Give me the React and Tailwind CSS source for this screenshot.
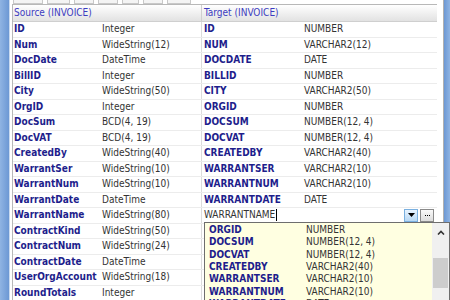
import React from 'react';

const rows = [
  ['ID', 'Integer', 'ID', 'NUMBER'],
  ['Num', 'WideString(12)', 'NUM', 'VARCHAR2(12)'],
  ['DocDate', 'DateTime', 'DOCDATE', 'DATE'],
  ['BillID', 'Integer', 'BILLID', 'NUMBER'],
  ['City', 'WideString(50)', 'CITY', 'VARCHAR2(50)'],
  ['OrgID', 'Integer', 'ORGID', 'NUMBER'],
  ['DocSum', 'BCD(4, 19)', 'DOCSUM', 'NUMBER(12, 4)'],
  ['DocVAT', 'BCD(4, 19)', 'DOCVAT', 'NUMBER(12, 4)'],
  ['CreatedBy', 'WideString(40)', 'CREATEDBY', 'VARCHAR2(40)'],
  ['WarrantSer', 'WideString(10)', 'WARRANTSER', 'VARCHAR2(10)'],
  ['WarrantNum', 'WideString(10)', 'WARRANTNUM', 'VARCHAR2(10)'],
  ['WarrantDate', 'DateTime', 'WARRANTDATE', 'DATE'],
  ['WarrantName', 'WideString(80)', null, null],
  ['ContractKind', 'WideString(50)', '', ''],
  ['ContractNum', 'WideString(24)', '', ''],
  ['ContractDate', 'DateTime', '', ''],
  ['UserOrgAccount', 'WideString(18)', '', ''],
  ['RoundTotals', 'Integer', '', ''],
];

const options = [
  ['ORGID', 'NUMBER'],
  ['DOCSUM', 'NUMBER(12, 4)'],
  ['DOCVAT', 'NUMBER(12, 4)'],
  ['CREATEDBY', 'VARCHAR2(40)'],
  ['WARRANTSER', 'VARCHAR2(10)'],
  ['WARRANTNUM', 'VARCHAR2(10)'],
  ['WARRANTDATE', 'DATE'],
];

const font = { fontFamily: '"DejaVu Sans Condensed", Tahoma, "Liberation Sans", sans-serif' };

const EditRow = () => (
  <div className="flex items-center h-full bg-white pl-[2px] pr-[3px]">
    <span className="text-[#333]">WARRANTNAME</span>
    <span className="w-px h-[12px] bg-black ml-px" />
    <div className="flex-1" />
    <div className="w-[14px] h-[13px] border border-[#7ab0e0] bg-gradient-to-b from-[#e8f4ff] to-[#b8d8f4] flex items-center justify-center">
      <svg width="7" height="4" viewBox="0 0 7 4"><path d="M0 0h7L3.5 4z" fill="#000" /></svg>
    </div>
    <div className="w-[14px] h-[13px] ml-[2px] border border-[#8a8a8a] bg-gradient-to-b from-[#fafafa] to-[#dcdcdc] flex items-center justify-center gap-px">
      <span className="w-px h-px bg-black" />
      <span className="w-px h-px bg-black" />
      <span className="w-px h-px bg-black" />
    </div>
  </div>
);

export default function App() {
  return (
    <div className="w-[450px] h-[300px] overflow-hidden relative flex bg-white text-[10px] leading-none" style={font}>
      <div className="w-[10px] bg-gradient-to-r from-[#8fb4e3] to-[#6c98d4] border-r border-[#c8daf0]" />
      <div className="flex-1 flex flex-col pl-[2px]">
        <div className="h-[5px] flex gap-[4px] pl-[1px] items-end">
          {[30, 23, 20, 20, 17, 20, 24].map((w, i) => (
            <div key={i} className="h-[4px] border-x border-b border-[#c8c8c8] bg-[#f4f4f4]" style={{ width: w }} />
          ))}
        </div>
        <div className="flex-1 flex flex-col border-l border-t border-[#b8b8b8] mr-[6px] relative">
          <div className="h-[17px] flex bg-gradient-to-b from-white to-[#e2e2e2] border-b border-[#cfcfcf] text-[#3c3cc0]">
            <div className="w-[189px] border-r border-[#cfcfcf] flex items-center pl-[1px]">Source (INVOICE)</div>
            <div className="flex-1 flex items-center pl-[2px]">Target (INVOICE)</div>
          </div>
          {rows.map((r, i) => (
            <div key={i} className="h-[15.5px] shrink-0 grid grid-cols-[88px_101px_101px_1fr] border-b border-[#ececec]">
              <div className="flex items-center font-bold text-[#1e1e8c] pl-[1px] whitespace-nowrap">{r[0]}</div>
              <div className="flex items-center text-[#333] pl-[1px] border-r border-[#dcdcdc]">{r[1]}</div>
              {r[2] === null ? (
                <div className="col-span-2">
                  <EditRow />
                </div>
              ) : (
                <>
                  <div className="flex items-center font-bold text-[#1e1e8c] pl-[2px]">{r[2]}</div>
                  <div className="flex items-center text-[#333] pl-[1px]">{r[3]}</div>
                </>
              )}
            </div>
          ))}
        </div>
      </div>
      <div className="w-[7px] bg-gradient-to-r from-[#6c98d4] to-[#8fb4e3] border-l border-[#b0b0b0]" />

      <div className="absolute left-[204px] top-[222px] w-[246px] h-[80px] border border-[#6e6e6e] bg-[#ffffe1] flex">
        <div className="flex-1 flex flex-col pt-px">
          {options.map((o, i) => (
            <div key={i} className="h-[12.3px] shrink-0 flex items-center">
              <div className="w-[101px] pl-[4px] font-bold text-[#1e1e8c]">{o[0]}</div>
              <div className="text-[#333]">{o[1]}</div>
            </div>
          ))}
        </div>
        <div className="w-[17px] bg-[#f0f0f0] flex flex-col items-center">
          <svg className="mt-[7px]" width="8" height="5" viewBox="0 0 8 5"><path d="M1 4.5L4 1.5L7 4.5" stroke="#333" strokeWidth="1.6" fill="none" /></svg>
          <div className="mt-[23px] w-[15px] h-[30px] bg-[#cdcdcd]" />
        </div>
      </div>
    </div>
  );
}
